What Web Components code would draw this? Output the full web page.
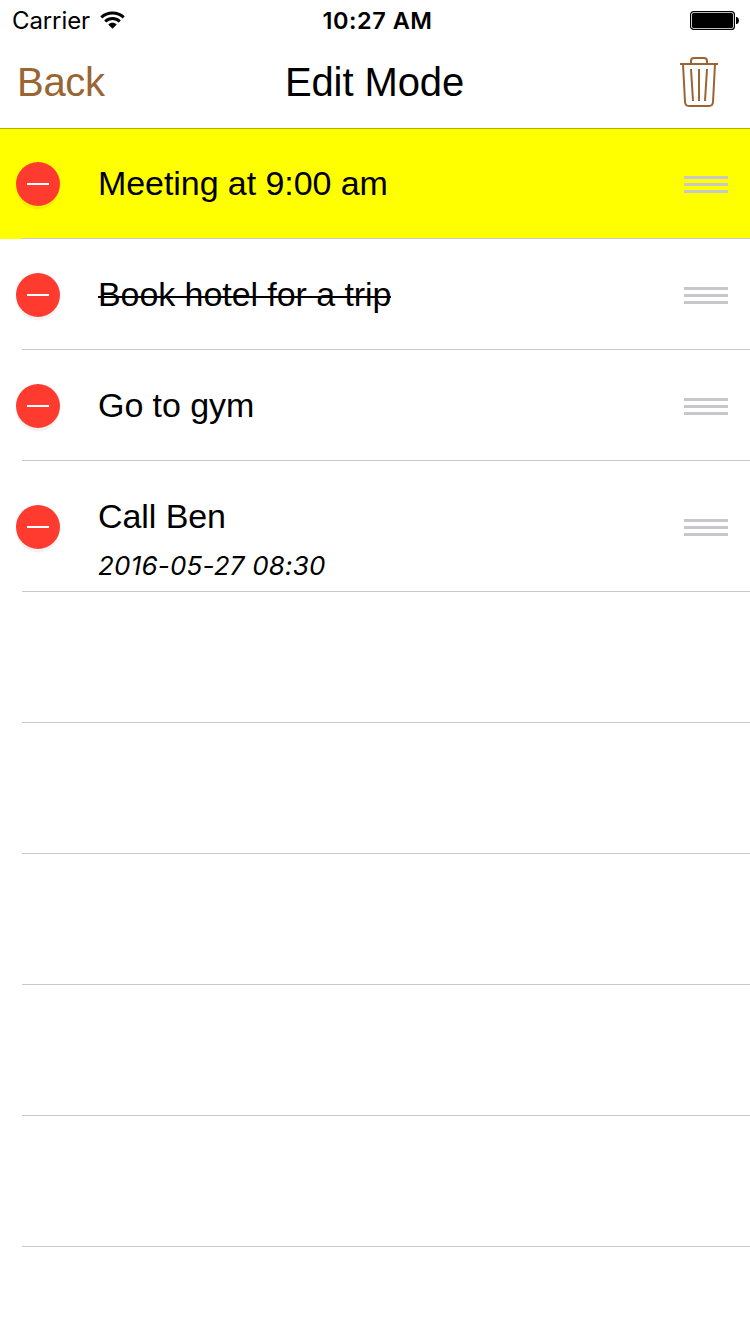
<!DOCTYPE html>
<html lang="en">
<head>
<meta charset="utf-8">
<title>Edit Mode</title>
<style>
  body {
    margin: 0;
    width: 750px;
    height: 1334px;
    overflow: hidden;
    background: #fff;
    color: #000;
    font-family: "Liberation Sans", Arial, sans-serif;
  }
</style>
</head>
<body>
<status-bar carrier="Carrier" time="10:27 AM"></status-bar>
<nav-bar>
  <span slot="left">Back</span>
  Edit Mode
  <trash-icon slot="right"></trash-icon>
</nav-bar>
<main>
  <todo-row highlighted>Meeting at 9:00 am</todo-row>
  <todo-row done>Book hotel for a trip</todo-row>
  <todo-row>Go to gym</todo-row>
  <todo-row tall>Call Ben<span slot="date">2016-05-27 08:30</span></todo-row>
  <empty-row></empty-row>
  <empty-row></empty-row>
  <empty-row></empty-row>
  <empty-row></empty-row>
  <empty-row></empty-row>
</main>

<script>
class StatusBar extends HTMLElement {
  constructor() {
    super();
    this.attachShadow({ mode: 'open' });
  }

  static get styles() {
    return /* css */ `
    :host {
      display: grid;
      grid-template-columns: 1fr auto 1fr;
      align-items: center;
      height: 40px;
      padding: 0 11px 0 12px;
      box-sizing: border-box;
      font-family: Inter, sans-serif;
      font-size: 24px;
      line-height: 38px;
    }

    .left {
      display: flex;
      align-items: center;
      gap: 10px;
    }

    .carrier {
      letter-spacing: -0.1px;
      padding-top: 2px;
    }

    .time {
      font-size: 23.5px;
      font-weight: 600;
      letter-spacing: 0.5px;
      padding: 2px 0 0 4px;
    }

    svg {
      display: block;
    }

    .battery {
      justify-self: end;
    }
    `;
  }

  connectedCallback() {
    this.shadowRoot.innerHTML = /* html */ `
      <style>${StatusBar.styles}</style>
      <div class="left">
        <span class="carrier">${this.getAttribute('carrier')}</span>
        <svg width="25" height="18" viewBox="0 0 25 18">
          <g fill="none" stroke="#000" stroke-width="3">
            <path d="M1.300 6.300C7.600 .7 17.400 .7 23.700 6.300"/>
            <path d="M5.200 10.500c4.200-3.900 10.400-3.900 14.600 0"/>
          </g>
          <path d="M8.300 13.400c2.200-2.200 6.200-2.200 8.400 0l-4.200 4.300z"/>
        </svg>
      </div>
      <span class="time">${this.getAttribute('time')}</span>
      <svg class="battery" width="49" height="19" viewBox="0 0 49 19">
        <rect x=".6" y=".6" width="43.8" height="17.8" rx="3" fill="none" stroke="#000" stroke-width="1.2"/>
        <rect x="2" y="2" width="41" height="15" rx="1.6"/>
        <path d="M46 6h1q2 1 2 3.500t-2 3.500h-1z"/>
      </svg>
    `;
  }
}

class NavBar extends HTMLElement {
  constructor() {
    super();
    this.attachShadow({ mode: 'open' });
  }

  static get styles() {
    return /* css */ `
    :host {
      display: grid;
      grid-template-columns: 1fr auto 1fr;
      position: relative;
      height: 88px;
      padding: 0 32px 0 17px;
      box-sizing: border-box;
      font-size: 40px;
      line-height: 84px;
      letter-spacing: -0.1px;
      box-shadow: 0 1px 0 rgba(0, 0, 0, 0.3);
    }

    .left {
      color: #996633;
      letter-spacing: -0.3px;
    }

    .title {
      padding-left: 14px;
    }

    .right {
      justify-self: end;
      padding-top: 17px;
    }
    `;
  }

  connectedCallback() {
    this.shadowRoot.innerHTML = /* html */ `
      <style>${NavBar.styles}</style>
      <div class="left"><slot name="left"></slot></div>
      <div class="title"><slot></slot></div>
      <div class="right"><slot name="right"></slot></div>
    `;
  }
}

class TrashIcon extends HTMLElement {
  constructor() {
    super();
    this.attachShadow({ mode: 'open' });
  }

  connectedCallback() {
    this.shadowRoot.innerHTML = /* html */ `
      <style>
        :host { display: block; color: #996633; }
        svg { display: block; }
      </style>
      <svg width="38" height="50" viewBox="0 0 38 50" fill="none" stroke="currentColor" stroke-width="2">
        <path d="M0 7h38M11 7V4q0-3 3-3h10q3 0 3 3v3"/>
        <path d="M3 7l2 38q.3 4 4 4h20q3.700 0 4-4l2-38"/>
        <path d="M11 12l2 32M19 12v32M27 12l-2 32"/>
      </svg>
    `;
  }
}

class TodoRow extends HTMLElement {
  constructor() {
    super();
    this.attachShadow({ mode: 'open' });
  }

  static get styles() {
    return /* css */ `
    :host {
      display: grid;
      grid-template-columns: 44px 1fr 44px;
      column-gap: 38px;
      height: 111px;
      padding: 0 22px 0 16px;
      box-sizing: border-box;
      background: linear-gradient(#c8c7cc, #c8c7cc) 22px 100% / 100% 1px no-repeat;
    }

    :host([highlighted]) {
      background-color: #ffff00;
    }

    :host([tall]) {
      height: 131px;
    }

    .delete {
      display: flex;
      align-items: center;
      justify-content: center;
      align-self: center;
      width: 44px;
      height: 44px;
      margin-top: 1px;
      border-radius: 50%;
      background: #ff3b30;
      box-shadow: 0 4px 0 -0.5px rgba(0, 0, 0, 0.05);
    }

    .delete::before {
      content: "";
      width: 22px;
      height: 2px;
      background: #fff;
    }

    .text {
      padding-top: 35px;
    }

    .title {
      font-size: 34px;
      line-height: 40px;
      letter-spacing: -0.07px;
      white-space: nowrap;
    }

    /* drawn as a background so the line sits at a whole pixel */
    :host([done]) .title slot {
      display: inline-block;
      background: linear-gradient(#000, #000) 0 22px / 100% 2px no-repeat;
    }

    .date {
      font: italic 26px/32px Inter, sans-serif;
      letter-spacing: 0.2px;
      margin-top: 14px;
    }

    .grip {
      display: grid;
      gap: 4px;
      align-self: center;
      margin-top: 2px;
    }

    .grip i {
      height: 3px;
      background: #c7c7cc;
    }
    `;
  }

  connectedCallback() {
    this.shadowRoot.innerHTML = /* html */ `
      <style>${TodoRow.styles}</style>
      <div class="delete"></div>
      <div class="text">
        <div class="title"><slot></slot></div>
        <div class="date"><slot name="date"></slot></div>
      </div>
      <div class="grip"><i></i><i></i><i></i></div>
    `;
  }
}

class EmptyRow extends HTMLElement {
  constructor() {
    super();
    this.attachShadow({ mode: 'open' });
  }

  connectedCallback() {
    this.shadowRoot.innerHTML = /* html */ `
      <style>
        :host {
          display: block;
          height: 130px;
          margin-left: 22px;
          border-bottom: 1px solid #c8c7cc;
        }
      </style>
    `;
  }
}

customElements.define('status-bar', StatusBar);
customElements.define('nav-bar', NavBar);
customElements.define('trash-icon', TrashIcon);
customElements.define('todo-row', TodoRow);
customElements.define('empty-row', EmptyRow);
</script>
</body>
</html>
